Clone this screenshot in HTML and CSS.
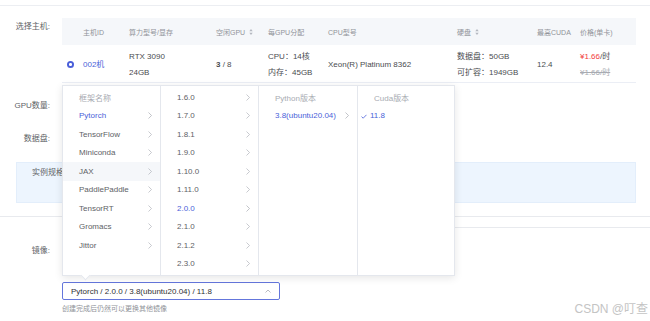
FILE: index.html
```html
<!DOCTYPE html>
<html lang="zh">
<head>
    <meta charset="UTF-8">
    <meta name="viewport" content="width=device-width, initial-scale=1.0">
    <title>选择主机</title>
    <link rel="stylesheet" href="styles.css">
</head>
<body>
    <div class="topbar"></div>

    <div class="form-row host-row">
        <label class="form-label">选择主机:</label>
        <div class="host-table">
            <div class="table-head">
                <div class="cell first">主机ID</div>
                <div class="cell">算力型号/显存</div>
                <div class="cell">空闲GPU <svg class="sort" viewBox="0 0 4 7"><path d="M2 0L4 2.6H0Z M2 7L0 4.4H4Z"/></svg></div>
                <div class="cell">每GPU分配</div>
                <div class="cell">CPU型号</div>
                <div class="cell">硬盘 <svg class="sort" viewBox="0 0 4 7"><path d="M2 0L4 2.6H0Z M2 7L0 4.4H4Z"/></svg></div>
                <div class="cell">最高CUDA</div>
                <div class="cell">价格(单卡)</div>
            </div>
            <div class="table-row">
                <div class="cell first-row"><span class="radio"></span><span class="host-id">002机</span></div>
                <div class="cell"><div>RTX 3090</div><div>24GB</div></div>
                <div class="cell"><b>3</b>&nbsp;/ 8</div>
                <div class="cell"><div>CPU：14核</div><div>内存：45GB</div></div>
                <div class="cell">Xeon(R) Platinum 8362</div>
                <div class="cell"><div>数据盘：50GB</div><div>可扩容：1949GB</div></div>
                <div class="cell">12.4</div>
                <div class="cell"><div><span class="price">¥1.66</span>/时</div><div class="old-price">¥1.66/时</div></div>
            </div>
        </div>
    </div>

    <div class="form-row gpu-row">
        <label class="form-label">GPU数量:</label>
    </div>
    <div class="form-row disk-row">
        <label class="form-label">数据盘:</label>
    </div>

    <div class="spec-box">实例规格</div>

    <div class="divider"></div>
    <div class="divider inner"></div>

    <div class="form-row mirror-row">
        <label class="form-label">镜像:</label>
    </div>

    <div class="mirror-select">
        <span>Pytorch / 2.0.0 / 3.8(ubuntu20.04) / 11.8</span>
        <svg class="select-arrow" viewBox="0 0 6 4"><polyline points="0.5,3.5 3,1 5.5,3.5"/></svg>
    </div>
    <p class="hint">创建完成后仍然可以更换其他镜像</p>

    <div class="cascader">
        <ul class="cascader-col">
            <li class="col-title">框架名称</li>
            <li class="active">Pytorch <svg class="chev" viewBox="0 0 4 7"><polyline points="0.5,0.5 3.5,3.5 0.5,6.5"/></svg></li>
            <li>TensorFlow <svg class="chev" viewBox="0 0 4 7"><polyline points="0.5,0.5 3.5,3.5 0.5,6.5"/></svg></li>
            <li>Miniconda <svg class="chev" viewBox="0 0 4 7"><polyline points="0.5,0.5 3.5,3.5 0.5,6.5"/></svg></li>
            <li class="hover">JAX <svg class="chev" viewBox="0 0 4 7"><polyline points="0.5,0.5 3.5,3.5 0.5,6.5"/></svg></li>
            <li>PaddlePaddle <svg class="chev" viewBox="0 0 4 7"><polyline points="0.5,0.5 3.5,3.5 0.5,6.5"/></svg></li>
            <li>TensorRT <svg class="chev" viewBox="0 0 4 7"><polyline points="0.5,0.5 3.5,3.5 0.5,6.5"/></svg></li>
            <li>Gromacs <svg class="chev" viewBox="0 0 4 7"><polyline points="0.5,0.5 3.5,3.5 0.5,6.5"/></svg></li>
            <li>Jittor <svg class="chev" viewBox="0 0 4 7"><polyline points="0.5,0.5 3.5,3.5 0.5,6.5"/></svg></li>
        </ul>
        <ul class="cascader-col">
            <li>1.6.0 <svg class="chev" viewBox="0 0 4 7"><polyline points="0.5,0.5 3.5,3.5 0.5,6.5"/></svg></li>
            <li>1.7.0 <svg class="chev" viewBox="0 0 4 7"><polyline points="0.5,0.5 3.5,3.5 0.5,6.5"/></svg></li>
            <li>1.8.1 <svg class="chev" viewBox="0 0 4 7"><polyline points="0.5,0.5 3.5,3.5 0.5,6.5"/></svg></li>
            <li>1.9.0 <svg class="chev" viewBox="0 0 4 7"><polyline points="0.5,0.5 3.5,3.5 0.5,6.5"/></svg></li>
            <li>1.10.0 <svg class="chev" viewBox="0 0 4 7"><polyline points="0.5,0.5 3.5,3.5 0.5,6.5"/></svg></li>
            <li>1.11.0 <svg class="chev" viewBox="0 0 4 7"><polyline points="0.5,0.5 3.5,3.5 0.5,6.5"/></svg></li>
            <li class="active">2.0.0 <svg class="chev" viewBox="0 0 4 7"><polyline points="0.5,0.5 3.5,3.5 0.5,6.5"/></svg></li>
            <li>2.1.0 <svg class="chev" viewBox="0 0 4 7"><polyline points="0.5,0.5 3.5,3.5 0.5,6.5"/></svg></li>
            <li>2.1.2 <svg class="chev" viewBox="0 0 4 7"><polyline points="0.5,0.5 3.5,3.5 0.5,6.5"/></svg></li>
            <li>2.3.0 <svg class="chev" viewBox="0 0 4 7"><polyline points="0.5,0.5 3.5,3.5 0.5,6.5"/></svg></li>
        </ul>
        <ul class="cascader-col">
            <li class="col-title">Python版本</li>
            <li class="active">3.8(ubuntu20.04) <svg class="chev" viewBox="0 0 4 7"><polyline points="0.5,0.5 3.5,3.5 0.5,6.5"/></svg></li>
        </ul>
        <ul class="cascader-col">
            <li class="col-title">Cuda版本</li>
            <li class="active checked"><svg class="check" viewBox="0 0 6 5"><polyline points="0.5,2.6 2.2,4.2 5.5,0.8"/></svg>11.8</li>
        </ul>
        <span class="popper-arrow"></span>
    </div>

    <div class="watermark">CSDN @叮查</div>
</body>
</html>
```

FILE: styles.css
```css
* { box-sizing: border-box; }
body { margin: 0; background: #fff; font-family: "Liberation Sans", "Noto Sans CJK SC", sans-serif; font-size: 8px; color: #606266; position: relative; width: 650px; height: 321px; overflow: hidden; }
ul { list-style: none; margin: 0; padding: 0; }
p { margin: 0; }

.topbar { height: 6px; border-bottom: 1px solid #eceef2; }

.form-row { display: flex; }
.form-label { width: 50px; text-align: right; margin-right: 12px; flex-shrink: 0; line-height: 22px; white-space: nowrap; }

.host-row { margin-top: 12px; }
.host-row .form-label { line-height: 18px; }
.host-table { width: 574px; }
.table-head, .table-row { display: grid; grid-template-columns: 67px 87px 52px 60px 129px 80px 43px 56px; }
.table-head { height: 27px; background: #f5f7fa; color: #909399; font-size: 7px; }
.table-head .cell { display: flex; align-items: center; }
.table-head .first { padding-left: 21px; }
.sort { width: 4px; height: 6px; margin-left: 4px; fill: #b4b8c0; }
.table-row { height: 38px; border-bottom: 1px solid #ebeef5; color: #4a4c50; line-height: 16px; padding-top: 2px; }
.table-row .cell { display: flex; flex-direction: column; justify-content: center; }
.table-row .first-row { flex-direction: row; align-items: center; justify-content: flex-start; padding-left: 5px; }
.table-row .cell b { font-weight: bold; }
.table-row .cell:nth-child(3) { flex-direction: row; align-items: center; justify-content: flex-start; }
.radio { width: 7px; height: 7px; border-radius: 50%; background: #4a5fd9; position: relative; margin-right: 9px; }
.radio::after { content: ""; position: absolute; left: 2.3px; top: 2.3px; width: 2.4px; height: 2.4px; border-radius: 50%; background: #fff; }
.host-id { color: #4a5fd9; }
.price { color: #f23c3c; }
.old-price { color: #a8abb2; text-decoration: line-through; }

.gpu-row { margin-top: 12px; }
.disk-row { margin-top: 11px; }

.spec-box { margin: 12px 0 0 16px; width: 620px; height: 41px; background: #edf5fe; border: 1px solid #e3eefb; padding: 5px 0 0 15px; line-height: 10px; color: #606266; }

.divider { margin-top: 13px; border-top: 1px solid #e8eaee; }
.divider.inner { margin-top: 10px; margin-left: 62px; }

.mirror-row { margin-top: 12px; }

.mirror-select { margin: 20px 0 0 62px; width: 218px; height: 18px; border: 1px solid #6476dc; border-radius: 2px; display: flex; align-items: center; justify-content: space-between; padding: 0 8px; color: #303133; }
.select-arrow { width: 6px; height: 4px; fill: none; stroke: #a8abb2; stroke-width: 0.8; }
.hint { margin: 3px 0 0 62px; font-size: 7px; color: #909399; line-height: 12px; }

.cascader { position: absolute; left: 62px; top: 85px; width: 393px; height: 191px; background: #fff; border: 1px solid #e4e7ed; box-shadow: 0 2px 8px rgba(0, 0, 0, 0.1); display: grid; grid-template-columns: 98px 98px 99px 1fr; padding-top: 2px; }
.cascader-col { border-right: 1px solid #e4e7ed; margin-top: -2px; padding-top: 2px; }
.cascader-col:last-of-type { border-right: none; }
.cascader-col li { height: 18.5px; display: flex; align-items: center; justify-content: space-between; padding: 0 8px 0 16px; white-space: nowrap; color: #606266; position: relative; }
.cascader-col li.col-title { color: #a8abb2; }
.cascader-col li.active { color: #4a5fd9; }
.cascader-col li.hover { background: #f5f7fa; }
.cascader-col li.checked { justify-content: flex-start; padding-left: 12px; }
.chev { width: 4px; height: 7px; fill: none; stroke: #b0b3ba; stroke-width: 0.7; }
.active .chev { stroke: #a8abb2; }
.check { position: absolute; left: 3px; top: 7px; width: 6px; height: 5px; fill: none; stroke: #4a5fd9; stroke-width: 0.8; }
.popper-arrow { position: absolute; left: 19px; bottom: -4px; width: 7px; height: 7px; background: #fff; border-right: 1px solid #e4e7ed; border-bottom: 1px solid #e4e7ed; transform: rotate(45deg); }

.watermark { position: absolute; right: 2px; bottom: 5px; font-size: 12px; color: #c4c4c4; line-height: 14px; }
```
